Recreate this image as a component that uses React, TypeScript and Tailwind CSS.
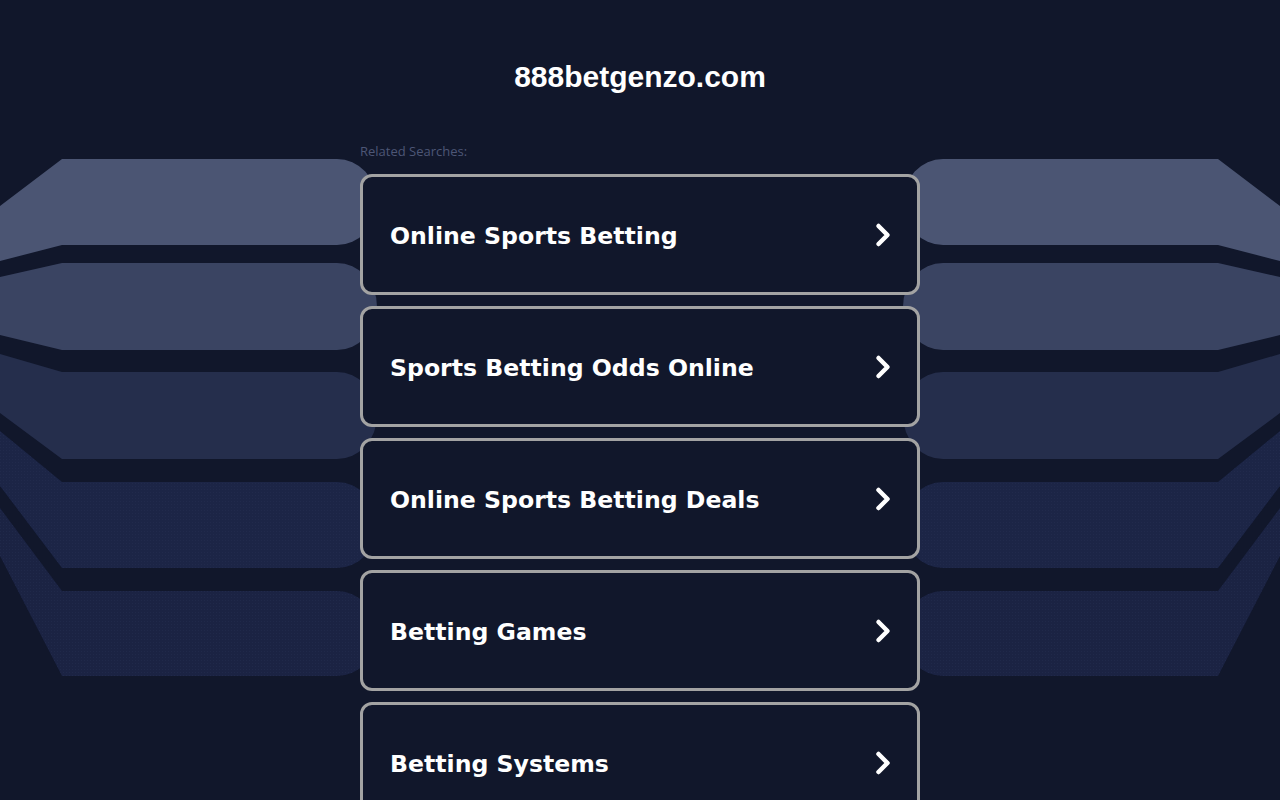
import { ChevronRight } from 'lucide-react';

const searches = [
    'Online Sports Betting',
    'Sports Betting Odds Online',
    'Online Sports Betting Deals',
    'Betting Games',
    'Betting Systems',
];

// left-side bands, the right side is the mirror image
const bands = [
    { top: 159, bottom: 245, edgeTop: 206, edgeBottom: 261, fill: '#4b5573', dots: false },
    { top: 263, bottom: 350, edgeTop: 277, edgeBottom: 335, fill: '#3a4462', dots: false },
    { top: 372, bottom: 459, edgeTop: 354, edgeBottom: 413, fill: '#252e4c', dots: false },
    { top: 482, bottom: 568, edgeTop: 431, edgeBottom: 486, fill: '#1c2546', dots: true },
    { top: 591, bottom: 676, edgeTop: 508, edgeBottom: 556, fill: '#1b2343', dots: true },
];

function bandPath(b: typeof bands[number]) {
    const h = (b.bottom - b.top) / 2;
    return `M0 ${b.edgeTop} L62 ${b.top} L337 ${b.top} A40 ${h} 0 0 1 337 ${b.bottom} L62 ${b.bottom} L0 ${b.edgeBottom} Z`;
}

function Backdrop() {
    return (
        <svg
            className="absolute top-0 left-1/2 -translate-x-1/2 pointer-events-none"
            width="1280"
            height="800"
            viewBox="0 0 1280 800"
        >
            <defs>
                <pattern id="dots" width="3" height="3" patternUnits="userSpaceOnUse">
                    <rect x="0" y="0" width="1" height="1" fill="#2a3458" />
                </pattern>
            </defs>
            {bands.map((b, i) => (
                <g key={i}>
                    <path d={bandPath(b)} fill={b.fill} />
                    {b.dots && <path d={bandPath(b)} fill="url(#dots)" opacity="0.35" />}
                    <g transform="translate(1280 0) scale(-1 1)">
                        <path d={bandPath(b)} fill={b.fill} />
                        {b.dots && <path d={bandPath(b)} fill="url(#dots)" opacity="0.35" />}
                    </g>
                </g>
            ))}
        </svg>
    );
}

export default function App() {
    return (
        <div className="relative min-h-screen h-[800px] overflow-hidden bg-[#11172b]">
            <Backdrop />

            <div className="relative z-10 flex flex-col items-center">
                <h1 className="pt-[58px] text-[30px] leading-[38px] font-bold text-white font-['Liberation_Sans',Arial,sans-serif]">
                    888betgenzo.com
                </h1>

                <div className="w-[560px] mt-[46px]">
                    <p className="text-[13px] leading-[18px] text-[#4d5676] font-['Open_Sans',sans-serif]">
                        Related Searches:
                    </p>

                    <div className="mt-[14px] flex flex-col gap-[11px]">
                        {searches.map((s) => (
                            <a
                                key={s}
                                href="#"
                                className="h-[121px] shrink-0 flex items-center justify-between pl-[27px] pr-[16px] border-[3px] border-[#a3a3a3] rounded-[12px] bg-[#11172b] text-white"
                            >
                                <span className="pt-[5px] text-[23.6px] font-bold font-['DejaVu_Sans',Verdana,sans-serif]">
                                    {s}
                                </span>
                                <ChevronRight className="w-[36px] h-[36px]" strokeWidth={3} />
                            </a>
                        ))}
                    </div>
                </div>
            </div>
        </div>
    );
}
